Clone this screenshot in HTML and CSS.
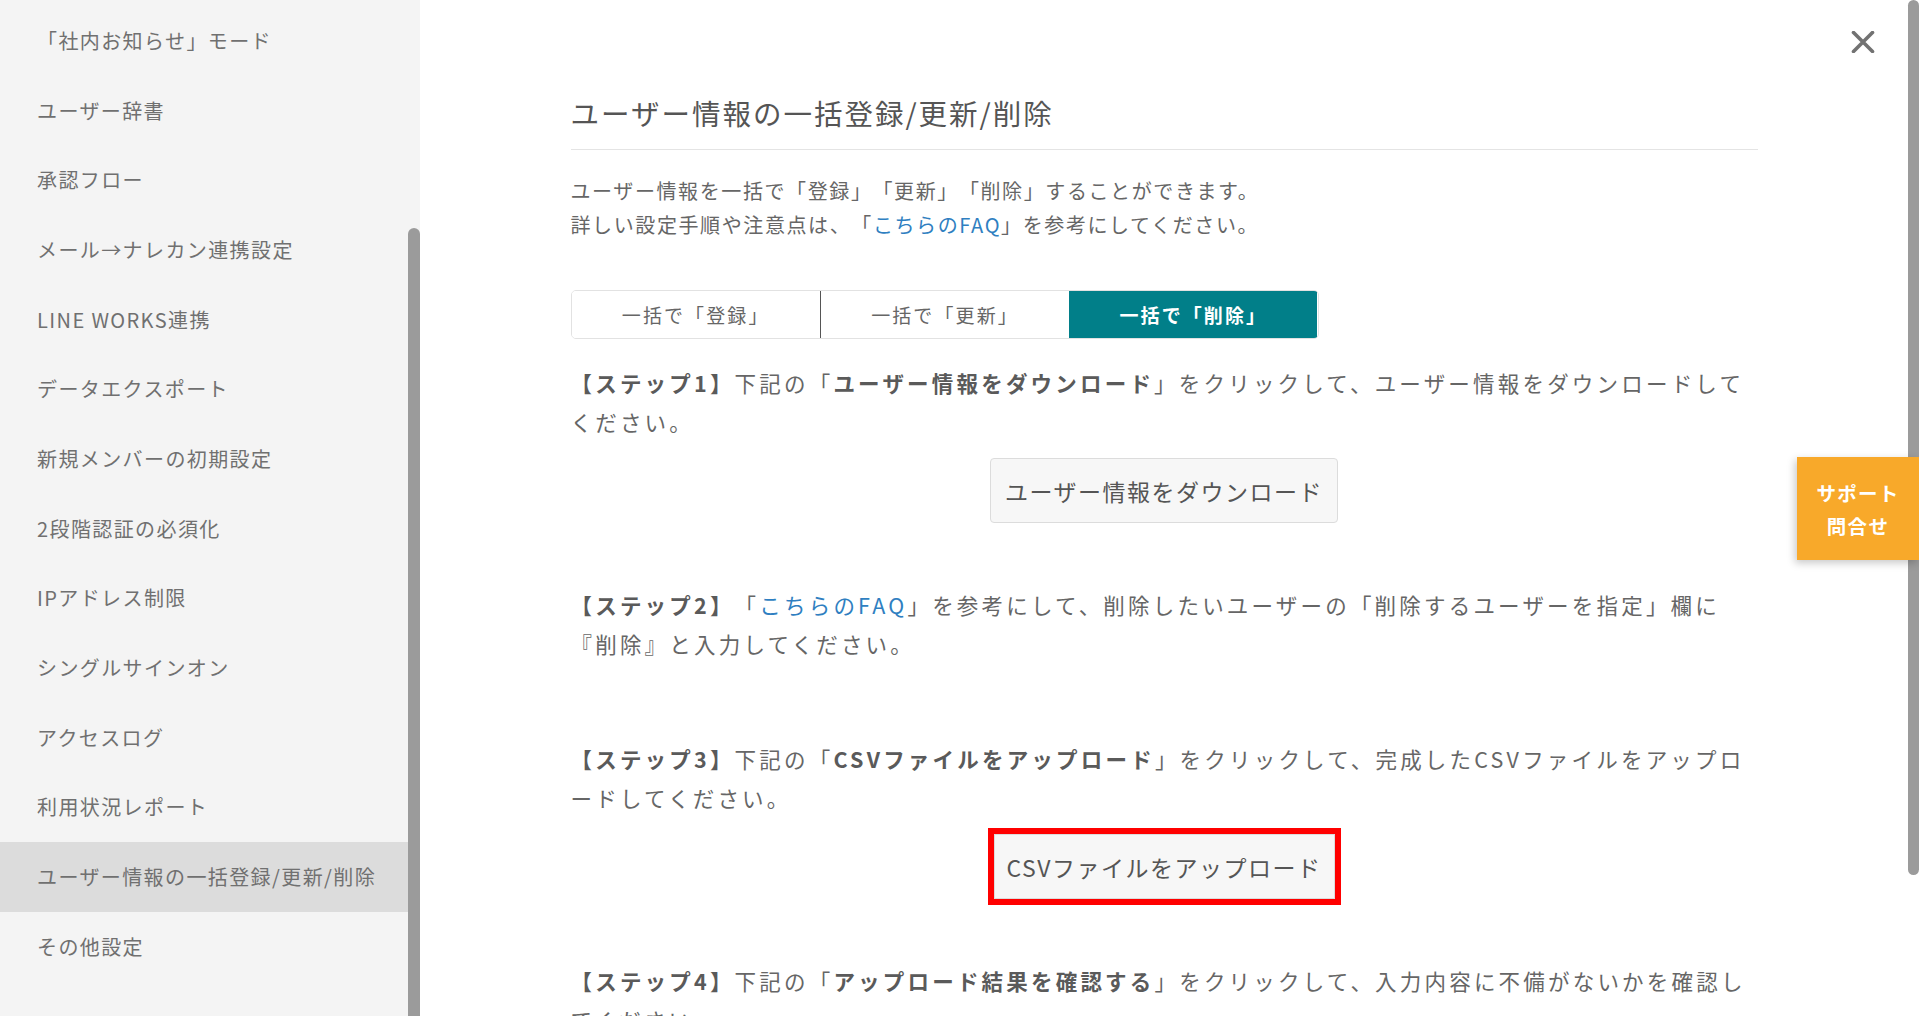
FILE: index.html
```html
<!DOCTYPE html>
<html lang="ja">
<head>
    <meta charset="utf-8">
    <title>ユーザー情報の一括登録/更新/削除</title>
    <link rel="stylesheet" href="styles.css">
</head>
<body>
<div class="layout">
    <aside class="sidebar">
        <ul class="menu">
            <li class="menu-item">「社内お知らせ」モード</li>
            <li class="menu-item">ユーザー辞書</li>
            <li class="menu-item">承認フロー</li>
            <li class="menu-item">メール→ナレカン連携設定</li>
            <li class="menu-item">LINE WORKS連携</li>
            <li class="menu-item">データエクスポート</li>
            <li class="menu-item">新規メンバーの初期設定</li>
            <li class="menu-item">2段階認証の必須化</li>
            <li class="menu-item">IPアドレス制限</li>
            <li class="menu-item">シングルサインオン</li>
            <li class="menu-item">アクセスログ</li>
            <li class="menu-item">利用状況レポート</li>
            <li class="menu-item is-active">ユーザー情報の一括登録/更新/削除</li>
            <li class="menu-item">その他設定</li>
        </ul>
        <div class="scroll-track">
            <div class="scroll-thumb side-thumb"></div>
        </div>
    </aside>

    <main class="panel">
        <div class="panel-body">
            <div class="container">
                <h1 class="panel-title">ユーザー情報の一括登録/更新/削除</h1>

                <p class="intro">
                    ユーザー情報を一括で「登録」「更新」「削除」することができます。<br>
                    詳しい設定手順や注意点は、「<a href="#" class="link">こちらのFAQ</a>」を参考にしてください。
                </p>

                <div class="tabs">
                    <button type="button" class="tab">一括で「登録」</button>
                    <button type="button" class="tab tab-split">一括で「更新」</button>
                    <button type="button" class="tab is-active">一括で「削除」</button>
                </div>

                <section class="step">
                    <p class="step-text"><b>【ステップ1】</b>下記の「<b>ユーザー情報をダウンロード</b>」をクリックして、ユーザー情報をダウンロードしてください。</p>
                    <div class="step-action">
                        <button type="button" class="btn">ユーザー情報をダウンロード</button>
                    </div>
                </section>

                <section class="step step-plain">
                    <p class="step-text"><b>【ステップ2】</b>「<a href="#" class="link">こちらのFAQ</a>」を参考にして、削除したいユーザーの「削除するユーザーを指定」欄に『削除』と入力してください。</p>
                </section>

                <section class="step">
                    <p class="step-text"><b>【ステップ3】</b>下記の「<b>CSVファイルをアップロード</b>」をクリックして、完成したCSVファイルをアップロードしてください。</p>
                    <div class="step-action">
                        <button type="button" class="btn btn-marked">CSVファイルをアップロード</button>
                    </div>
                </section>

                <section class="step">
                    <p class="step-text"><b>【ステップ4】</b>下記の「<b>アップロード結果を確認する</b>」をクリックして、入力内容に不備がないかを確認してください。</p>
                </section>
            </div>
        </div>

        <div class="scroll-track panel-track">
            <div class="scroll-thumb panel-thumb"></div>
        </div>

        <button type="button" class="close-btn" aria-label="閉じる">
            <svg width="24" height="22" viewBox="0 0 24 22">
                <path d="M2.5 1.5 L21.5 20.5 M21.5 1.5 L2.5 20.5" stroke="#727272" stroke-width="3.6" stroke-linecap="round" fill="none"/>
            </svg>
        </button>

        <a href="#" class="support-tab">サポート<br>問合せ</a>
    </main>
</div>
</body>
</html>
```

FILE: styles.css
```css
* {
    box-sizing: border-box;
}

body {
    margin: 0;
    font-family: "Noto Sans CJK JP", "Noto Sans", sans-serif;
    color: #666;
    background: #fff;
    overflow: hidden;
    text-spacing-trim: space-all;
}

.layout {
    display: flex;
    height: 100vh;
}

/* sidebar */
.sidebar {
    width: 420px;
    flex-shrink: 0;
    display: flex;
    background-color: #f4f4f4;
}

.menu {
    flex: 1;
    list-style: none;
    margin: 0;
    padding: 6px 0 0;
}

.menu-item {
    height: 69.67px;
    line-height: 69.67px;
    padding-left: 37px;
    font-size: 20px;
    letter-spacing: 1.4px;
    color: #707070;
    white-space: nowrap;
}

.menu-item.is-active {
    background-color: #dcdcdc;
}

.scroll-track {
    width: 12px;
    flex-shrink: 0;
}

.scroll-thumb {
    background-color: #9b9b9b;
    border-radius: 6px;
}

.side-thumb {
    margin-top: 228px;
    height: 820px;
    border-radius: 6px 6px 0 0;
}

/* main panel */
.panel {
    flex: 1;
    display: flex;
    position: relative;
    overflow: hidden;
}

.panel-body {
    flex: 1;
}

.container {
    width: 1187px;
    margin: 0 auto;
    padding-top: 93px;
}

.panel-title {
    margin: 0;
    padding-bottom: 16px;
    border-bottom: 1px solid #e4e4e4;
    font-size: 28.5px;
    line-height: 40px;
    font-weight: normal;
    letter-spacing: 2px;
    color: #555;
}

.intro {
    margin: 24px 0 0;
    font-size: 20px;
    line-height: 34px;
    letter-spacing: 1.6px;
}

.link {
    color: #2f7fc1;
    text-decoration: none;
}

.tabs {
    display: flex;
    width: 748px;
    height: 49px;
    margin-top: 48px;
    border: 1px solid #e2e2e2;
    border-radius: 5px;
    overflow: hidden;
}

.tab {
    flex: 1;
    border: none;
    background: #fff;
    font-family: inherit;
    font-size: 19px;
    letter-spacing: 2.1px;
    text-spacing-trim: space-all;
    color: #666;
    padding: 0;
    cursor: pointer;
}

.tab-split {
    border-left: 1px solid #555;
}

.tab.is-active {
    background-color: #017f89;
    color: #fff;
    font-weight: bold;
}

.step {
    margin-top: 23.5px;
    margin-bottom: 61.5px;
}

.step + .step {
    margin-top: 0;
}

.step-plain {
    margin-bottom: 76px;
}

.step-text {
    margin: 0;
    font-size: 21.5px;
    line-height: 39px;
    letter-spacing: 3.2px;
}

.step-text b {
    color: #5a5a5a;
}

.step-action {
    margin-top: 17.5px;
    text-align: center;
}

.btn {
    height: 65px;
    padding: 0 14px;
    border: 1px solid #dcdcdc;
    border-radius: 4px;
    background-color: #f7f7f7;
    font-family: inherit;
    font-size: 23px;
    letter-spacing: 1.5px;
    text-spacing-trim: space-all;
    color: #555;
    cursor: pointer;
}

.btn-marked {
    padding: 0 12px;
    outline: 6.5px solid #ff0000;
    border-radius: 0;
}

/* page scrollbar */
.panel-track {
    width: 11px;
}

.panel-thumb {
    height: 875px;
}

.close-btn {
    position: absolute;
    top: 31px;
    right: 44px;
    padding: 0;
    border: none;
    background: none;
    cursor: pointer;
    line-height: 0;
}

.support-tab {
    position: absolute;
    right: 0;
    top: 457px;
    width: 122px;
    height: 103px;
    display: flex;
    align-items: center;
    justify-content: center;
    text-align: center;
    background-color: #f8a92a;
    color: #fff;
    font-size: 19.5px;
    font-weight: bold;
    line-height: 33px;
    letter-spacing: 1.3px;
    text-decoration: none;
    box-shadow: -2px 3px 8px rgba(0, 0, 0, 0.22);
}
```
